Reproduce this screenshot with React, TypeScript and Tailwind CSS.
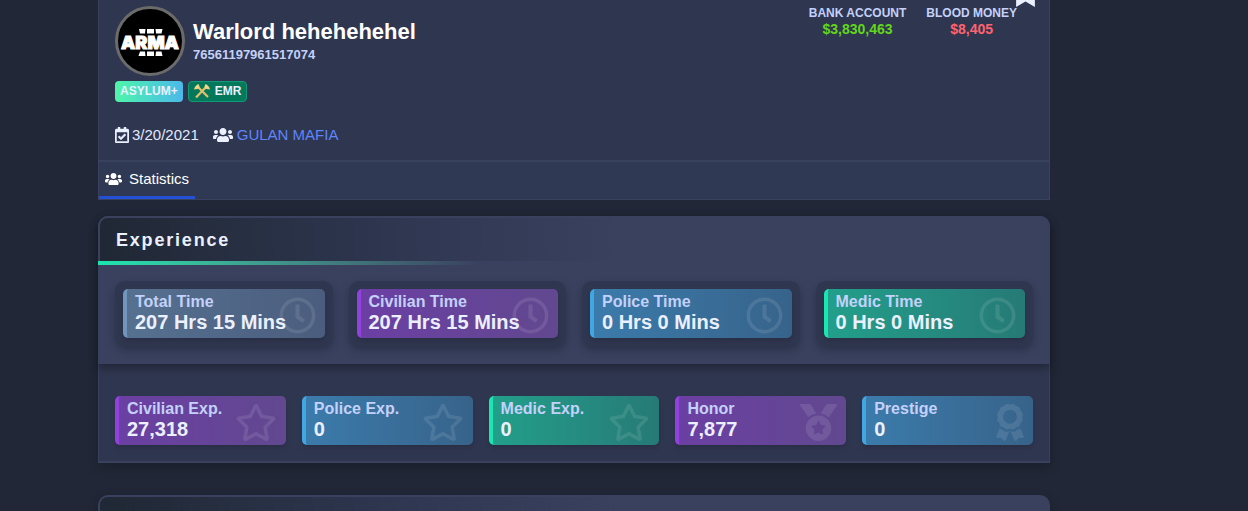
import type { IconType } from "react-icons"
import { FaAward, FaBookmark, FaMedal, FaRegCalendarCheck, FaRegClock, FaRegStar, FaUsers } from "react-icons/fa"

const tones = {
  slate: "border-[#7096bc] from-[#567190] to-[#4b5d7e]",
  purple: "border-[#9142dc] from-[#6b3fa3] to-[#61488f]",
  blue: "border-[#41a7e3] from-[#3b7bab] to-[#37638a]",
  green: "border-[#19e6b0] from-[#229f8b] to-[#267a76]",
}

type Stat = { label: string; value: string; tone: keyof typeof tones; icon: IconType; iconWidth: string }

const times: Stat[] = [
  { label: "Total Time", value: "207 Hrs 15 Mins", tone: "slate", icon: FaRegClock, iconWidth: "w-[37px]" },
  { label: "Civilian Time", value: "207 Hrs 15 Mins", tone: "purple", icon: FaRegClock, iconWidth: "w-[37px]" },
  { label: "Police Time", value: "0 Hrs 0 Mins", tone: "blue", icon: FaRegClock, iconWidth: "w-[37px]" },
  { label: "Medic Time", value: "0 Hrs 0 Mins", tone: "green", icon: FaRegClock, iconWidth: "w-[37px]" },
]

const levels: Stat[] = [
  { label: "Civilian Exp.", value: "27,318", tone: "purple", icon: FaRegStar, iconWidth: "w-[42px]" },
  { label: "Police Exp.", value: "0", tone: "blue", icon: FaRegStar, iconWidth: "w-[42px]" },
  { label: "Medic Exp.", value: "0", tone: "green", icon: FaRegStar, iconWidth: "w-[42px]" },
  { label: "Honor", value: "7,877", tone: "purple", icon: FaMedal, iconWidth: "w-[37px]" },
  { label: "Prestige", value: "0", tone: "blue", icon: FaAward, iconWidth: "w-[28px]" },
]

function StatCard({ label, value, tone, icon: Icon, iconWidth }: Stat) {
  return (
    <div className={`relative h-[49px] rounded-[5px] border-l-4 bg-linear-to-r pl-2 pt-[3px] shadow-md ${tones[tone]}`}>
      <Icon className={`absolute top-2 right-[9px] h-[37px] text-white/10 ${iconWidth}`} />
      <h3 className="relative text-base leading-5 font-bold whitespace-nowrap text-[#c3d1fb]">{label}</h3>
      <p className="relative text-xl leading-5 font-bold whitespace-nowrap text-[#ebf0ff]">{value}</p>
    </div>
  )
}

function Avatar() {
  return (
    <svg viewBox="0 0 70 70" className="h-[70px] w-[70px] shrink-0" role="img" aria-label="Arma 3">
      <circle cx="35" cy="35" r="33.5" fill="#000" stroke="#6b6b6b" strokeWidth="3" />
      <g fill="#fff">
        <path d="M24 23h6.5l-.5 4.500h-5zM32 23h7v4.500h-7zM40.500 23h7l-1 4.500h-5.500zM25 45.500h5l.5 4.500h-7zM32 45.500h7v4.500h-7zM41 45.500h5.500l1 4.500h-7z" />
        <text
          x="35"
          y="43"
          textAnchor="middle"
          fontFamily="Inter, sans-serif"
          fontWeight="900"
          fontSize="18"
          stroke="#fff"
          strokeWidth="1"
        >
          ARMA
        </text>
      </g>
    </svg>
  )
}

function CrossedAxes() {
  return (
    <svg viewBox="0 0 18 16" className="h-4 w-[18px]" aria-hidden="true">
      <path d="M4.500 3.500 15 14M13.500 3.500 3 14.500" stroke="#e3c069" strokeWidth="2.200" fill="none" />
      <path
        d="M1 6.500C1.500 4 3 2 5.500 1L6.500 3.500 6 5.500 4 6zM17 6.500C16.500 4 15 2 12.500 1L11.500 3.500 12 5.500l2 .5z"
        fill="#f3d58a"
      />
    </svg>
  )
}

function PanelHeader({ title }: { title?: string }) {
  return (
    <div className="h-[45px] rounded-t-[10px] border-2 border-b-0 border-[#39415f] bg-linear-to-r from-[#202835] via-[#2e3650] via-30% to-[#39415f] to-55% pl-4 pt-2">
      {title && <h2 className="text-lg leading-7 font-bold tracking-widest text-[#ebf0ff]">{title}</h2>}
    </div>
  )
}

export default function App() {
  return (
    <main className="h-screen overflow-hidden bg-[#212736] pr-[198px] pl-[98px] font-['Liberation_Sans',Arial,sans-serif] text-[#e2e9ff]">
      <section className="relative border-x border-b border-[#39415f] bg-[#2f364f]">
        <FaBookmark className="absolute -top-[18px] right-3.5 h-[25px] w-[19px] text-[#ebf0ff]" />
        <div className="border-b-2 border-[#39415f] px-4 pt-1.5 pb-[15px]">
          <div className="flex items-start">
            <Avatar />
            <div className="ml-2 pt-3">
              <h1 className="text-[22px] leading-7 font-bold text-white">Warlord hehehehehel</h1>
              <p className="text-[13px] leading-[18px] font-bold text-[#c3d1fb]">76561197961517074</p>
            </div>
            <dl className="mr-4 ml-auto flex gap-5 text-center font-bold">
              <div>
                <dt className="text-xs leading-[15px] text-[#c3d1fb]">BANK ACCOUNT</dt>
                <dd className="text-sm leading-4 text-[#62d61b]">$3,830,463</dd>
              </div>
              <div>
                <dt className="text-xs leading-[15px] text-[#c3d1fb]">BLOOD MONEY</dt>
                <dd className="text-sm leading-4 text-[#ff6370]">$8,405</dd>
              </div>
            </dl>
          </div>
          <div className="mt-[5px] flex gap-[5px] text-xs font-bold text-[#ebf0ff]">
            <span className="flex h-[21px] items-center rounded bg-linear-to-r from-[#4ff5a7] to-[#4db8e8] px-[5px] pb-0.5">
              ASYLUM+
            </span>
            <span className="flex h-[21px] items-center gap-1 rounded border border-[#119a77] bg-[#04785b] pr-[5px] pb-px pl-1">
              <CrossedAxes />
              EMR
            </span>
          </div>
          <div className="mt-[23px] flex items-center text-[15px] leading-5">
            <FaRegCalendarCheck className="mr-[3px] h-4 w-3.5 stroke-current stroke-[16px] text-[#ebf0ff]" />
            <span>3/20/2021</span>
            <FaUsers className="mr-1 ml-3.5 h-4 w-5 text-[#ebf0ff]" />
            <a href="#gang" className="text-[#5f85fb]">
              GULAN MAFIA
            </a>
          </div>
        </div>
        <nav className="flex bg-[#2f3953]">
          <button className="flex h-[37px] items-center gap-[7px] border-b-3 border-[#2450d6] px-1.5 text-[15px] text-white">
            <FaUsers className="h-4 w-[17px]" />
            Statistics
          </button>
        </nav>
      </section>

      <section className="mt-4 rounded-t-[10px] shadow-[0_4px_12px_rgba(0,0,0,0.2)]">
        <div className="relative rounded-t-[10px] bg-[#39415f] pb-[18px] shadow-[0_4px_8px_rgba(0,0,0,0.3)]">
          <PanelHeader title="Experience" />
          <div className="h-1 bg-linear-to-r from-[#19e6b0] to-[#39415f] to-40%" />
          <div className="grid grid-cols-4 gap-4 px-[17px] pt-4">
            {times.map((s) => (
              <div key={s.label} className="rounded-[10px] bg-[#2f364f] p-2 shadow-[0_4px_8px_rgba(0,0,0,0.25)]">
                <StatCard {...s} />
              </div>
            ))}
          </div>
        </div>
        <div className="grid grid-cols-5 gap-4 border-x border-b-2 border-[#39415f] bg-[#2f364f] px-4 pt-8 pb-4">
          {levels.map((s) => (
            <StatCard key={s.label} {...s} />
          ))}
        </div>
      </section>

      <section className="mt-8 rounded-t-[10px] shadow-[0_4px_12px_rgba(0,0,0,0.2)]">
        <PanelHeader />
      </section>
    </main>
  )
}
